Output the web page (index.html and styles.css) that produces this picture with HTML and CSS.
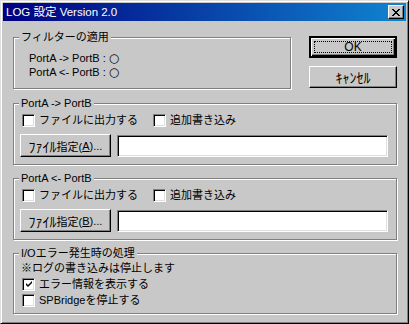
FILE: index.html
```html
<!DOCTYPE html>
<html lang="ja">
<head>
  <meta charset="UTF-8">
  <title>LOG 設定 Version 2.0</title>
  <link rel="stylesheet" href="styles.css">
</head>
<body>
  <div class="window">
    <div class="title-bar">
      <span class="title-text">LOG 設定 Version 2.0</span>
      <button class="close-btn" aria-label="閉じる">
        <svg width="8" height="7" viewBox="0 0 8 7"><path d="M0 0h2v1h1v1h2v-1h1v-1h2v1h-1v1h-1v1h-1v1h1v1h1v1h1v1h-2v-1h-1v-1h-2v1h-1v1h-2v-1h1v-1h1v-1h1v-1h-1v-1h-1v-1h-1z" fill="#000"/></svg>
      </button>
    </div>

    <div class="content">
      <div class="top-row">
        <div class="group group-filter">
          <span class="legend">フィルターの適用</span>
          <div class="status-line">PortA -&gt; PortB : <span class="lamp">○</span></div>
          <div class="status-line">PortA &lt;- PortB : <span class="lamp">○</span></div>
        </div>
        <div class="dialog-buttons">
          <button class="btn btn-default"><span class="focus">OK</span></button>
          <button class="btn btn-wide"><span class="hw">ｷｬﾝｾﾙ</span></button>
        </div>
      </div>

      <div class="group group-port">
        <span class="legend">PortA -&gt; PortB</span>
        <div class="check-row">
          <label class="check"><span class="box"></span>ファイルに出力する</label>
          <label class="check check-append"><span class="box"></span>追加書き込み</label>
        </div>
        <div class="file-row">
          <button class="btn btn-file"><span class="hw">ﾌｧｲﾙ</span>指定(<u>A</u>)...</button>
          <div class="field"></div>
        </div>
      </div>

      <div class="group group-port">
        <span class="legend">PortA &lt;- PortB</span>
        <div class="check-row">
          <label class="check"><span class="box"></span>ファイルに出力する</label>
          <label class="check check-append"><span class="box"></span>追加書き込み</label>
        </div>
        <div class="file-row">
          <button class="btn btn-file"><span class="hw">ﾌｧｲﾙ</span>指定(<u>B</u>)...</button>
          <div class="field"></div>
        </div>
      </div>

      <div class="group group-error">
        <span class="legend">I/Oエラー発生時の処理</span>
        <div class="note">※ログの書き込みは停止します</div>
        <label class="check check-line"><span class="box checked">
          <svg width="7" height="7" viewBox="0 0 7 7"><path d="M6 0v2l-4 4l-2-2v-2l2 2z" fill="#000"/></svg>
        </span>エラー情報を表示する</label>
        <label class="check check-line"><span class="box"></span>SPBridgeを停止する</label>
      </div>
    </div>
  </div>
</body>
</html>
```

FILE: styles.css
```css
:root {
  --face: #c8c8c8;
  --shadow: #808080;
  --light: #dfdfdf;
  --hilite: #ffffff;
  --dark: #000000;
}

* {
  margin: 0;
  padding: 0;
  box-sizing: border-box;
}

body {
  background: var(--face);
  font-family: "Liberation Sans", "Noto Sans CJK JP", sans-serif;
  font-size: 11px;
  color: #000;
}

.window {
  width: 409px;
  height: 324px;
  background: var(--face);
  border: 1px solid;
  border-color: var(--light) var(--dark) var(--dark) var(--light);
  box-shadow: inset 1px 1px 0 var(--hilite), inset -1px -1px 0 var(--shadow);
  padding: 2px;
}

.title-bar {
  height: 18px;
  display: flex;
  align-items: center;
  justify-content: space-between;
  padding: 0 2px 0 2px;
  background: linear-gradient(90deg, #000080, #1084d0);
  color: #fff;
}

.title-text {
  font-size: 11.5px;
  line-height: 18px;
  padding-left: 1px;
}

.close-btn {
  width: 16px;
  height: 14px;
  display: flex;
  align-items: center;
  justify-content: center;
  background: var(--face);
  border: 1px solid;
  border-color: var(--hilite) var(--dark) var(--dark) var(--hilite);
  box-shadow: inset -1px -1px 0 var(--shadow);
}

.content {
  padding: 16px 0 0 10px;
}

.top-row {
  display: flex;
  align-items: flex-start;
}

.group {
  position: relative;
  border: 1px solid var(--shadow);
  box-shadow: 1px 1px 0 var(--hilite), inset 1px 1px 0 var(--hilite);
}

.legend {
  position: absolute;
  top: -8px;
  left: 5px;
  padding: 0 2px;
  background: var(--face);
  line-height: 14px;
  white-space: nowrap;
}

.group-filter {
  width: 278px;
  height: 52px;
  padding: 13px 0 0 15px;
}

.status-line {
  display: flex;
  align-items: center;
  height: 14px;
  line-height: 12px;
  white-space: pre;
}

.lamp {
  font-family: "DejaVu Sans", sans-serif;
  font-size: 12px;
  line-height: 12px;
  margin-top: -1px;
}

.hw {
  font-family: "Noto Sans CJK JP", sans-serif;
  font-size: 14px;
  line-height: 14px;
}

.dialog-buttons {
  display: flex;
  flex-direction: column;
  gap: 8px;
  margin: -1px 0 0 18px;
}

.btn {
  font: inherit;
  color: #000;
  background: var(--face);
  border: 1px solid;
  border-color: var(--hilite) var(--dark) var(--dark) var(--hilite);
  box-shadow: inset -1px -1px 0 var(--shadow);
  display: flex;
  align-items: center;
  justify-content: center;
}

.btn-default,
.btn-wide {
  width: 88px;
  height: 22px;
}

.btn-default {
  border-width: 2px;
  border-color: var(--dark);
  box-shadow: inset 1px 1px 0 var(--hilite), inset -1px -1px 0 var(--dark), inset -2px -2px 0 var(--shadow);
  padding: 3px;
}

.focus {
  flex: 1;
  align-self: stretch;
  display: flex;
  align-items: center;
  justify-content: center;
  border: 1px dotted var(--dark);
  font-size: 12px;
}

.group-port {
  width: 384px;
  height: 62px;
  margin-top: 14px;
  padding: 10px 0 0 6px;
}

.group-port + .group-port {
  margin-top: 13px;
}

.check-row {
  display: flex;
  height: 13px;
}

.check {
  display: flex;
  align-items: center;
  gap: 4px;
  padding-left: 2px;
  line-height: 13px;
  white-space: nowrap;
}

.check-append {
  margin-left: 13px;
}

.box {
  width: 13px;
  height: 13px;
  flex: none;
  background: #fff;
  border: 1px solid;
  border-color: var(--shadow) var(--hilite) var(--hilite) var(--shadow);
  box-shadow: inset 1px 1px 0 var(--dark), inset -1px -1px 0 var(--light);
  display: flex;
  align-items: center;
  justify-content: center;
}

.box svg {
  margin: 1px 0 0 1px;
}

.file-row {
  display: flex;
  align-items: flex-start;
  margin-top: 7px;
}

.btn-file {
  width: 91px;
  height: 23px;
  white-space: nowrap;
}

.btn-file u {
  text-decoration: underline;
}

.field {
  width: 271px;
  height: 22px;
  margin: 1px 0 0 6px;
  background: #fff;
  border: 1px solid;
  border-color: var(--shadow) var(--hilite) var(--hilite) var(--shadow);
  box-shadow: inset 1px 1px 0 var(--dark), inset -1px -1px 0 var(--light);
}

.group-error {
  width: 384px;
  height: 61px;
  margin-top: 13px;
  padding: 7px 0 0 6px;
}

.note {
  line-height: 14px;
  padding-left: 1px;
}

.check-line {
  margin-top: 2px;
  height: 14px;
}

.check-line + .check-line {
  margin-top: 2px;
}
```
